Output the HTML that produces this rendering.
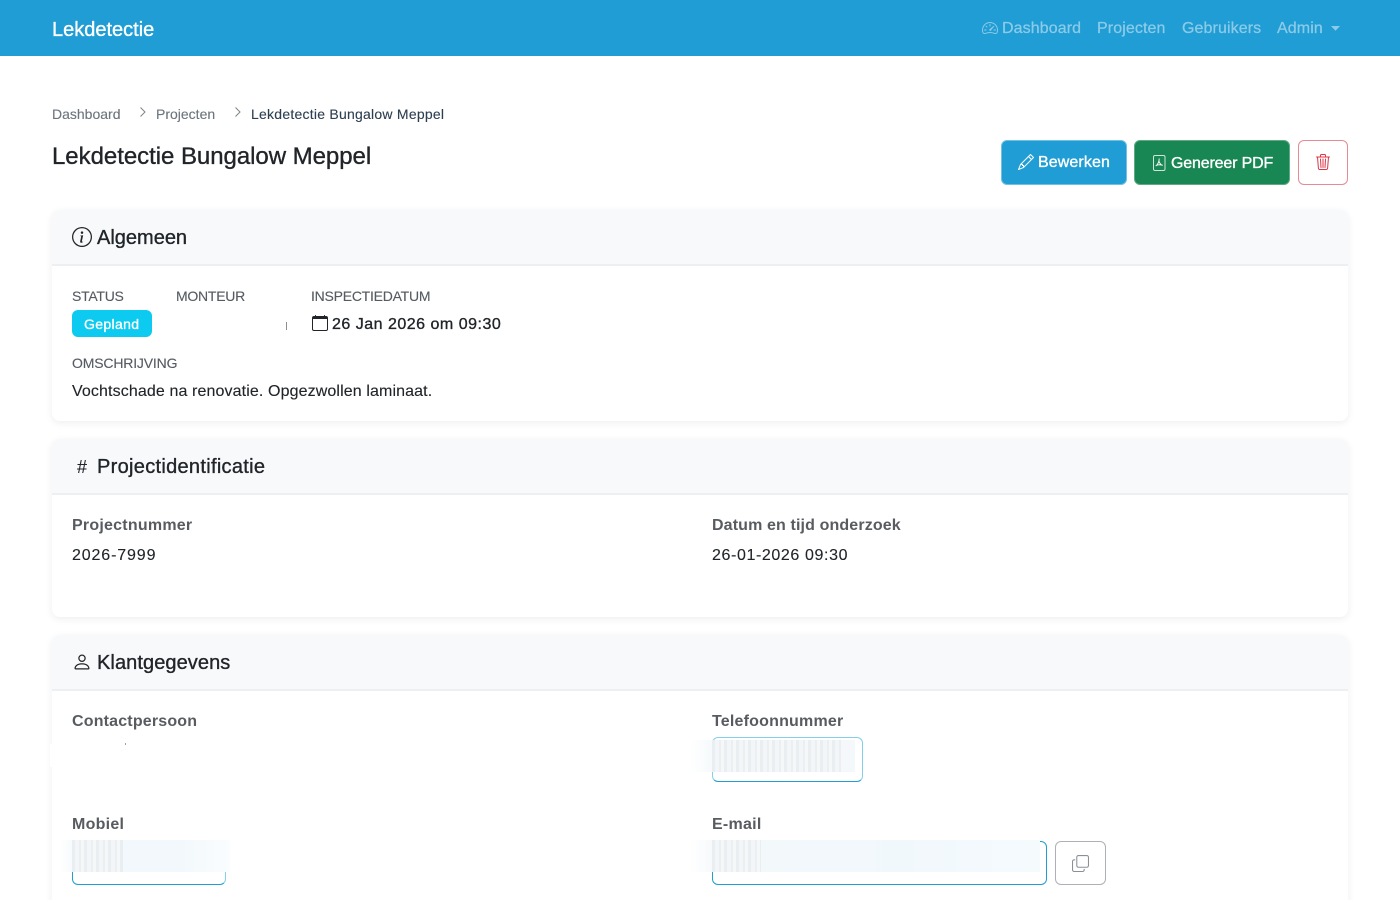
<!DOCTYPE html>
<html lang="nl">
<head>
<meta charset="utf-8">
<title>Lekdetectie Bungalow Meppel</title>
<style>
html,body{margin:0;padding:0;background:#fff;width:1400px;height:900px;overflow:hidden;}
#page{position:relative;width:1400px;height:900px;overflow:hidden;font-family:"Liberation Sans",sans-serif;color:#212529;font-size:16px;}
.t{position:absolute;white-space:nowrap;line-height:24px;-webkit-text-stroke:.12px currentColor;}
.t.m{-webkit-text-stroke:.35px currentColor;}
nav{position:absolute;left:0;top:0;width:1400px;height:56px;background:#1f9dd4;}
.nl{color:#8ccbe8;font-size:16px;letter-spacing:.1px;}
.t.nl{-webkit-text-stroke:.25px currentColor;}
.card{position:absolute;left:52px;width:1296px;background:#fff;border-radius:8px;box-shadow:0 2px 8px rgba(0,0,0,.07);overflow:hidden;}
.card .h{height:54px;background:#f8f9fa;border-bottom:2px solid #eeeff0;}
.btn{position:absolute;box-sizing:border-box;border-radius:6px;}
.lab{font-size:14px;color:#555b61;}
.t.b{font-weight:bold;color:#585c60;-webkit-text-stroke:0;}
svg{position:absolute;display:block;}
.blur{position:absolute;height:32px;}
.stripe{position:absolute;height:32px;background:repeating-linear-gradient(90deg,#e9eef1 0,#e9eef1 3px,#f3f6f8 3px,#f3f6f8 7px,#ebeff2 7px,#ebeff2 9px,#f5f7f9 9px,#f5f7f9 12px);}
</style>
</head>
<body>
<div id="page">
<nav>
  <span class="t m" style="left:52px;top:17px;font-size:20px;color:#fff;margin-top:1px;">Lekdetectie</span>
  <svg style="left:982px;top:20px" width="16" height="16" viewBox="0 0 16 16" fill="#8ccbe8"><path d="M8 4a.5.5 0 0 1 .5.5V6a.5.5 0 0 1-1 0V4.500A.5.5 0 0 1 8 4M3.732 5.732a.5.5 0 0 1 .707 0l.915.914a.5.5 0 1 1-.708.708l-.914-.915a.5.5 0 0 1 0-.707M2 10a.5.5 0 0 1 .5-.5h1.586a.5.5 0 0 1 0 1H2.500A.5.5 0 0 1 2 10m9.500 0a.5.5 0 0 1 .5-.5h1.500a.5.5 0 0 1 0 1H12a.5.5 0 0 1-.5-.5m.754-4.246a.39.39 0 0 0-.527-.02L7.547 9.310a.91.91 0 1 0 1.302 1.258l3.434-4.297a.39.39 0 0 0-.029-.518z"/><path fill-rule="evenodd" d="M0 10a8 8 0 1 1 15.547 2.661c-.442 1.253-1.845 1.602-2.932 1.250C11.309 13.488 9.475 13 8 13c-1.474 0-3.310.488-4.615.911-1.087.352-2.490.003-2.932-1.250A8 8 0 0 1 0 10m8-7a7 7 0 0 0-6.603 9.329c.203.575.923.876 1.680.630C4.397 12.533 6.358 12 8 12s3.604.532 4.923.96c.757.245 1.477-.056 1.680-.631A7 7 0 0 0 8 3"/></svg>
  <span class="t nl" style="left:1002px;top:17px;">Dashboard</span>
  <span class="t nl" style="left:1097px;top:17px;">Projecten</span>
  <span class="t nl" style="left:1182px;top:17px;">Gebruikers</span>
  <span class="t nl" style="left:1277px;top:17px;">Admin</span>
  <svg style="left:1331px;top:26px" width="9" height="5" viewBox="0 0 9 5"><path d="M0 0h9L4.500 4.800z" fill="#8ccbe8"/></svg>
</nav>

<span class="t" style="left:52px;top:102px;font-size:14px;color:#6c757d;">Dashboard</span>
<svg style="left:138px;top:106px" width="10" height="12" viewBox="0 0 10 12" fill="none" stroke="#7b848b" stroke-width="1"><path d="M2.500 1.500 7 6l-4.500 4.500"/></svg>
<span class="t" style="left:156px;top:102px;font-size:14px;color:#6c757d;">Projecten</span>
<svg style="left:233px;top:106px" width="10" height="12" viewBox="0 0 10 12" fill="none" stroke="#7b848b" stroke-width="1"><path d="M2.500 1.500 7 6l-4.500 4.500"/></svg>
<span class="t" style="left:251px;top:102px;font-size:14px;color:#2c3e50;letter-spacing:.24px;">Lekdetectie Bungalow Meppel</span>
<span class="t m" style="left:52px;top:145px;font-size:24px;color:#212529;letter-spacing:-.04px;">Lekdetectie Bungalow Meppel</span>

<div class="btn" style="left:1001px;top:140px;width:126px;height:45px;background:#1f9dd4;border:1px solid #6fc0e4;"></div>
<svg style="left:1018px;top:154px" width="16" height="16" viewBox="0 0 16 16" fill="#fff"><path d="M12.146.146a.5.5 0 0 1 .708 0l3 3a.5.5 0 0 1 0 .708l-10 10a.5.5 0 0 1-.168.11l-5 2a.5.5 0 0 1-.65-.65l2-5a.5.5 0 0 1 .11-.168zM11.207 2.500 13.500 4.793 14.793 3.500 12.500 1.207zm1.586 3L10.500 3.207 4 9.707V10h.5a.5.5 0 0 1 .5.5v.5h.5a.5.5 0 0 1 .5.5v.5h.293zm-9.761 5.175-.106.106-1.528 3.821 3.821-1.528.106-.106A.5.5 0 0 1 5 12.500V12h-.5a.5.5 0 0 1-.5-.5V11h-.5a.5.5 0 0 1-.468-.325"/></svg>
<span class="t m" style="left:1038px;top:151px;color:#fff;letter-spacing:.1px;">Bewerken</span>

<div class="btn" style="left:1134px;top:140px;width:156px;height:45px;background:#198754;border:1px solid #5fa985;"></div>
<svg style="left:1151px;top:155px" width="16" height="16" viewBox="0 0 16 16" fill="none" stroke="#fff"><rect x="2.500" y=".5" width="11.500" height="15" rx="1.500" stroke="#cfe4da"/><path d="M8.200 3.500c0 3-1.500 6-3.500 7.500M8.200 6.500c.5 2 2 3.500 3.500 4M5 10.500c2-1 4-1 6.700-.3" stroke-width=".9"/></svg>
<span class="t m" style="left:1171px;top:152px;color:#fff;letter-spacing:-.16px;">Genereer PDF</span>

<div class="btn" style="left:1298px;top:140px;width:50px;height:45px;background:#fff;border:1px solid #e88a95;"></div>
<svg style="left:1315px;top:154px" width="16" height="16" viewBox="0 0 16 16" fill="#dc3545"><path d="M6.500 1h3a.5.5 0 0 1 .5.5v1H6v-1a.5.5 0 0 1 .5-.5M11 2.500v-1A1.500 1.500 0 0 0 9.500 0h-3A1.500 1.500 0 0 0 5 1.500v1H1.500a.5.5 0 0 0 0 1h.538l.853 10.660A2 2 0 0 0 4.885 16h6.230a2 2 0 0 0 1.994-1.840l.853-10.660h.538a.5.5 0 0 0 0-1zm1.958 1-.846 10.580a1 1 0 0 1-.997.920h-6.230a1 1 0 0 1-.997-.920L3.042 3.500zm-7.487 1a.5.5 0 0 1 .528.470l.5 8.500a.5.5 0 0 1-.998.060L5 5.030a.5.5 0 0 1 .47-.53Zm5.058 0a.5.5 0 0 1 .47.530l-.5 8.500a.5.5 0 1 1-.998-.060l.5-8.500a.5.5 0 0 1 .528-.47M8 4.500a.5.5 0 0 1 .5.5v8.500a.5.5 0 0 1-1 0V5a.5.5 0 0 1 .5-.5"/></svg>

<!-- Algemeen -->
<div class="card" style="top:210px;height:211px;"><div class="h"></div></div>
<svg style="left:72px;top:227px" width="20" height="20" viewBox="0 0 16 16" fill="#212529"><path d="M8 15A7 7 0 1 1 8 1a7 7 0 0 1 0 14m0 1A8 8 0 1 0 8 0a8 8 0 0 0 0 16"/><path d="m8.930 6.588-2.290.287-.082.380.450.083c.294.070.352.176.288.469l-.738 3.468c-.194.897.105 1.319.808 1.319.545 0 1.178-.252 1.465-.598l.088-.416c-.200.176-.492.246-.686.246-.275 0-.375-.193-.304-.533zM9 4.500a1 1 0 1 1-2 0 1 1 0 0 1 2 0"/></svg>
<span class="t m" style="left:97px;top:226px;font-size:20px;">Algemeen</span>
<span class="t lab" style="left:72px;top:284px;letter-spacing:-.25px;">STATUS</span>
<span class="t lab" style="left:176px;top:284px;letter-spacing:-.25px;">MONTEUR</span>
<span class="t lab" style="left:311px;top:284px;letter-spacing:-.24px;">INSPECTIEDATUM</span>
<div class="btn" style="left:72px;top:310px;width:80px;height:27px;background:#0dcaf0;"></div>
<span class="t m" style="left:84px;top:312px;font-size:14px;color:#fff;letter-spacing:.35px;">Gepland</span>
<div style="position:absolute;left:286px;top:322px;width:1px;height:8px;background:#8a8f94;"></div>
<svg style="left:312px;top:315px" width="16" height="16" viewBox="0 0 16 16" fill="#212529"><path d="M3.500 0a.5.5 0 0 1 .5.5V1h8V.5a.5.5 0 0 1 1 0V1h1a2 2 0 0 1 2 2v11a2 2 0 0 1-2 2H2a2 2 0 0 1-2-2V3a2 2 0 0 1 2-2h1V.5a.5.5 0 0 1 .5-.5M1 4v10a1 1 0 0 0 1 1h12a1 1 0 0 0 1-1V4z"/></svg>
<span class="t m" style="left:332px;top:311px;letter-spacing:.5px;margin-top:2px;">26 Jan 2026 om 09:30</span>
<span class="t lab" style="left:72px;top:351px;letter-spacing:-.17px;">OMSCHRIJVING</span>
<span class="t" style="left:72px;top:380px;letter-spacing:.115px;">Vochtschade na renovatie. Opgezwollen laminaat.</span>

<!-- Projectidentificatie -->
<div class="card" style="top:439px;height:178px;"><div class="h"></div></div>
<span class="t" style="left:77px;top:455px;font-size:18px;">#</span>
<span class="t m" style="left:97px;top:455px;font-size:20px;letter-spacing:.3px;">Projectidentificatie</span>
<span class="t b" style="left:72px;top:514px;letter-spacing:.23px;">Projectnummer</span>
<span class="t" style="left:72px;top:544px;letter-spacing:.87px;">2026-7999</span>
<span class="t b" style="left:712px;top:514px;letter-spacing:.13px;">Datum en tijd onderzoek</span>
<span class="t" style="left:712px;top:544px;letter-spacing:.61px;">26-01-2026 09:30</span>

<!-- Klantgegevens -->
<div class="card" style="top:635px;height:300px;"><div class="h"></div></div>
<svg style="left:72px;top:652px" width="20" height="20" viewBox="0 0 16 16" fill="#212529"><path d="M8 8a3 3 0 1 0 0-6 3 3 0 0 0 0 6m2-3a2 2 0 1 1-4 0 2 2 0 0 1 4 0m4 8c0 1-1 1-1 1H3s-1 0-1-1 1-4 6-4 6 3 6 4m-1-.004c-.001-.246-.154-.986-.832-1.664C11.516 10.680 10.289 10 8 10s-3.516.680-4.168 1.332c-.678.678-.830 1.418-.832 1.664z"/></svg>
<span class="t m" style="left:97px;top:651px;font-size:20px;letter-spacing:.08px;">Klantgegevens</span>
<span class="t b" style="left:72px;top:710px;letter-spacing:.18px;">Contactpersoon</span>
<span class="t b" style="left:712px;top:710px;letter-spacing:.2px;">Telefoonnummer</span>
<div style="position:absolute;left:50px;top:744px;width:180px;height:23px;background:#fff;"></div>
<div style="position:absolute;left:125px;top:743px;width:1px;height:2px;background:#9aa0a6;"></div>

<div class="btn" style="left:712px;top:737px;width:151px;height:45px;border:1px solid #84cfe9;border-bottom-color:#1f9dd4;"></div>
<div class="blur" style="left:690px;top:740px;width:165px;background:linear-gradient(90deg,#fff 0,#f6fafc 13%,#f4f8fa 100%);"></div>
<div class="stripe" style="left:712px;top:740px;width:131px;"></div>

<span class="t b" style="left:72px;top:813px;letter-spacing:.25px;">Mobiel</span>
<span class="t b" style="left:712px;top:813px;letter-spacing:.25px;">E-mail</span>

<div class="btn" style="left:72px;top:840px;width:154px;height:45px;border:1px solid #1f9dd4;border-right-color:#84cfe9;"></div>
<div class="blur" style="left:60px;top:840px;width:170px;background:linear-gradient(90deg,#fff 0,#f3f9fc 10%,#f2f8fc 70%,#fafdfe 100%);"></div>
<div class="stripe" style="left:72px;top:840px;width:51px;"></div>

<div class="btn" style="left:712px;top:841px;width:335px;height:44px;border:1px solid #1f9dd4;"></div>
<div class="blur" style="left:690px;top:840px;width:350px;background:linear-gradient(90deg,#fff 0,#f4f8fb 8%,#f1f8fc 60%,#f5fafd 100%);"></div>
<div class="stripe" style="left:712px;top:840px;width:49px;"></div>

<div class="btn" style="left:1055px;top:841px;width:51px;height:44px;background:#fff;border:1px solid #adb1b6;"></div>
<svg style="left:1072px;top:855px" width="17" height="17" viewBox="0 0 16 16" fill="#8a9096"><path fill-rule="evenodd" d="M4 2a2 2 0 0 1 2-2h8a2 2 0 0 1 2 2v8a2 2 0 0 1-2 2H6a2 2 0 0 1-2-2zm2-1a1 1 0 0 0-1 1v8a1 1 0 0 0 1 1h8a1 1 0 0 0 1-1V2a1 1 0 0 0-1-1zM2 5a1 1 0 0 0-1 1v8a1 1 0 0 0 1 1h8a1 1 0 0 0 1-1v-1h1v1a2 2 0 0 1-2 2H2a2 2 0 0 1-2-2V6a2 2 0 0 1 2-2h1v1z"/></svg>
</div>
</body>
</html>
